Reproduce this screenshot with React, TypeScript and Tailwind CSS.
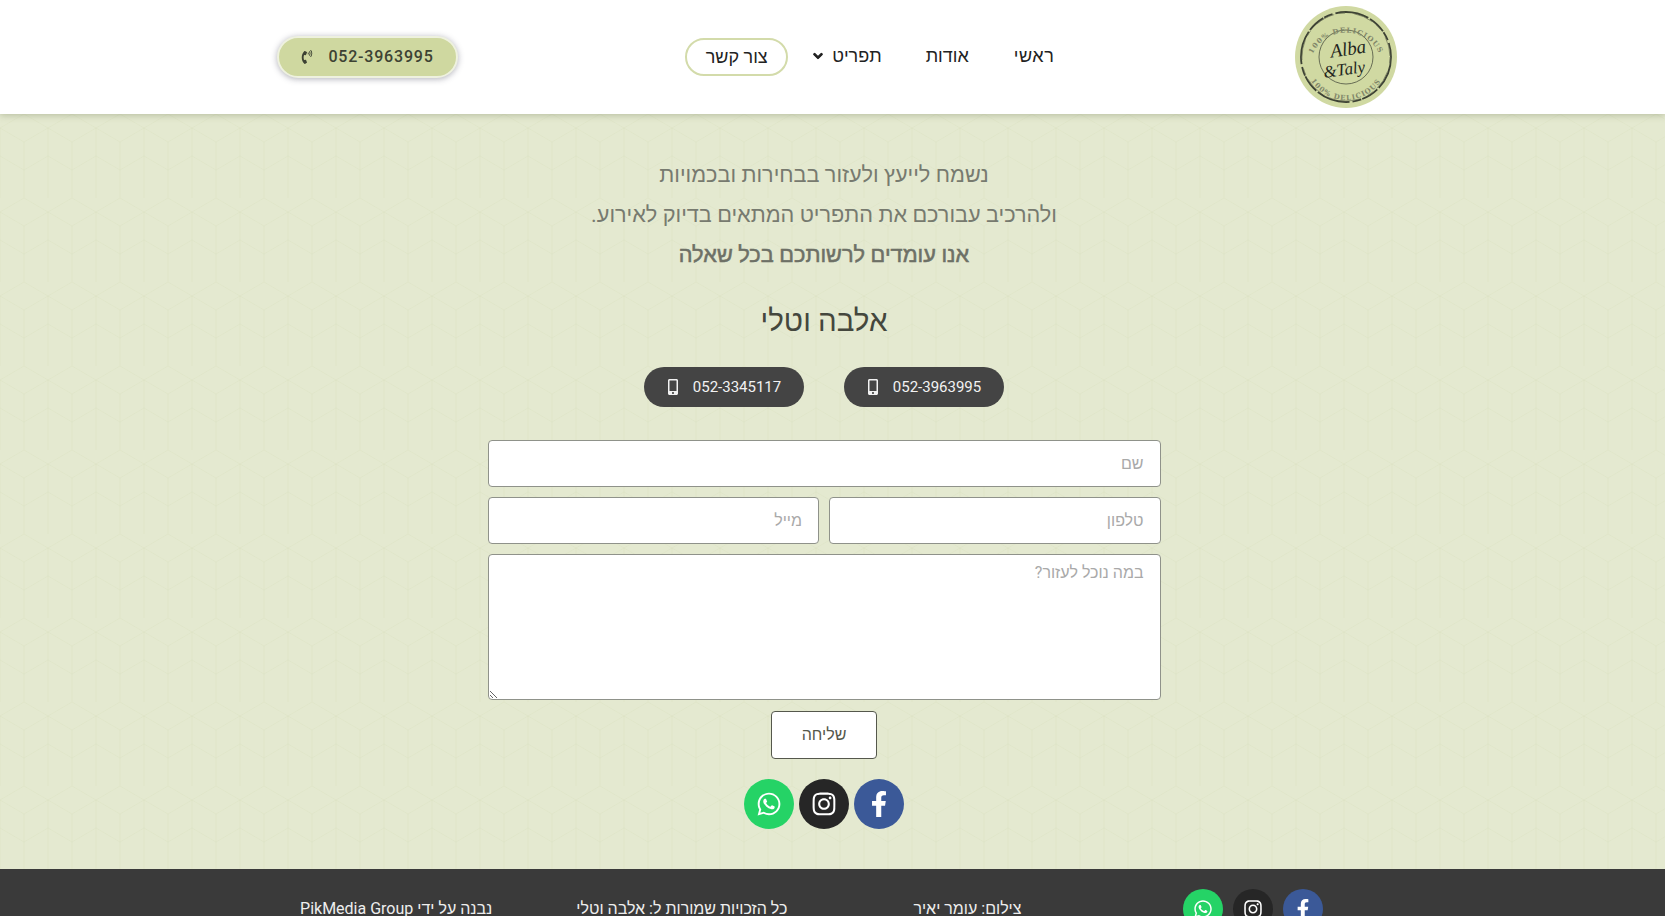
import type { ReactNode } from "react"
import { FaChevronDown, FaFacebookF, FaInstagram, FaMobileAlt, FaPhoneVolume, FaWhatsapp } from "react-icons/fa"

function Logo() {
  return (
    <svg dir="ltr" width="104" height="104" viewBox="0 0 104 104" className="shrink-0">
      <defs>
        <path id="arcTop" d="M 16 58 A 36.5 36.5 0 0 1 88 58" />
        <path id="arcBottom" d="M 11 60 A 41.5 41.5 0 0 0 93 60" />
      </defs>
      <circle cx="52" cy="52" r="51" fill="#d0d9a2" />
      <circle cx="52" cy="52" r="45" fill="none" stroke="#3d4234" strokeWidth="1.8" strokeDasharray="34 2 18 1 9 3" />
      <circle cx="52" cy="52" r="44" fill="none" stroke="#6d7358" strokeWidth="0.7" strokeDasharray="6 9 20 5" />
      <circle cx="52" cy="52" r="27" fill="none" stroke="#4b5040" strokeWidth="0.8" />
      <text direction="ltr" fontSize="7" letterSpacing="1" fill="#808669" fontFamily="'DejaVu Serif', serif" fontWeight="700">
        <textPath href="#arcTop" startOffset="50%" textAnchor="middle">100% DELICIOUS</textPath>
      </text>
      <text direction="ltr" fontSize="7" letterSpacing="1" fill="#808669" fontFamily="'DejaVu Serif', serif" fontWeight="700">
        <textPath href="#arcBottom" startOffset="50%" textAnchor="middle">100% DELICIOUS</textPath>
      </text>
      <text direction="ltr" x="55" y="50" textAnchor="middle" fontSize="19" fontStyle="italic" fill="#23261d" fontFamily="'Liberation Serif', serif" transform="rotate(-8 55 50)">Alba</text>
      <text direction="ltr" x="51" y="70" textAnchor="middle" fontSize="17" fontStyle="italic" fill="#23261d" fontFamily="'Liberation Serif', serif" transform="rotate(-8 51 70)">&amp;Taly</text>
    </svg>
  )
}

function Social({ size, color, children }: { size: string; color: string; children: ReactNode }) {
  return <span className={`flex items-center justify-center rounded-full text-white ${size} ${color}`}>{children}</span>
}

function Socials({ big }: { big: boolean }) {
  const size = big ? "h-[50px] w-[50px]" : "h-10 w-10"
  const icon = big ? 26 : 20
  return (
    <div className={big ? "flex justify-center gap-[5px]" : "flex gap-[10px]"}>
      <Social size={size} color="bg-[#3b5998]"><FaFacebookF size={icon} /></Social>
      <Social size={size} color="bg-[#262626]"><FaInstagram size={icon} /></Social>
      <Social size={size} color="bg-[#25d366]"><FaWhatsapp size={icon} /></Social>
    </div>
  )
}

function PhonePill({ number }: { number: string }) {
  return (
    <a className="flex h-10 w-40 items-center justify-center gap-[12px] rounded-full bg-[#444444] pr-[2px] text-[15px] text-[#f2f2f2]">
      <span dir="ltr">{number}</span>
      <FaMobileAlt size={16} />
    </a>
  )
}

// faint tumbling-block texture of the page background
function Texture() {
  return (
    <svg className="absolute inset-0 h-full w-full" aria-hidden="true">
      <defs>
        <pattern id="blocks" width="48" height="84" patternUnits="userSpaceOnUse">
          <path
            d="M24 0 L48 14 L48 42 L24 56 L0 42 L0 14 Z M24 28 L24 56 M24 28 L0 14 M24 28 L48 14 M0 42 L0 84 M48 42 L48 84 M24 56 L24 84"
            fill="none"
            stroke="#d8dfbd"
            strokeWidth="1"
            opacity="0.35"
          />
        </pattern>
      </defs>
      <rect width="100%" height="100%" fill="url(#blocks)" />
    </svg>
  )
}

const fieldClass =
  "w-full rounded-[4px] border border-[#8f928a] bg-white px-4 text-[16px] text-[#333] placeholder:text-[#a9a9a9] outline-none"

export default function App() {
  return (
    <div
      dir="rtl"
      className="flex h-[916px] flex-col overflow-hidden bg-[#e4e9d0] font-['Roboto','Liberation_Sans',sans-serif]"
    >
      <header className="relative z-10 h-[114px] shrink-0 bg-white shadow-[0_1px_7px_rgba(90,100,60,0.35)]">
        <div className="mx-auto flex h-full w-[1140px] items-center pr-[5px] pl-[14px]">
          <Logo />
          <nav className="mr-[239px] flex items-center text-[18px] leading-[26px] text-[#222]">
            <a className="-translate-y-px tracking-[0.6px]">ראשי</a>
            <a className="mr-[45px] -translate-y-px">אודות</a>
            <a className="mr-[44px] flex -translate-y-px items-center gap-[9px]">
              תפריט
              <FaChevronDown size={10} stroke="currentColor" strokeWidth={60} />
            </a>
            <a className="mr-[25px] flex h-[38px] w-[103px] items-center justify-center rounded-full border-2 border-[#d3dbaa]">
              צור קשר
            </a>
          </nav>
          <a className="mr-auto flex h-[42px] w-[181px] items-center justify-center gap-[14px] rounded-full border-2 border-[#eef1df] bg-[#cfd8a0] text-[16px] font-medium tracking-[0.8px] text-[#3d4233] shadow-[0_1px_6px_rgba(60,60,80,0.4)]">
            <span dir="ltr">052-3963995</span>
            <FaPhoneVolume size={14} />
          </a>
        </div>
      </header>

      <main className="relative flex h-[755px] shrink-0 flex-col items-center pt-[41px] pr-[17px]">
        <Texture />
        <div className="relative flex flex-col items-center">
          <p className="text-[21.7px] leading-[40px] text-[#777a6f]">נשמח לייעץ ולעזור בבחירות ובכמויות</p>
          <p className="text-[21.7px] leading-[40px] text-[#777a6f]">ולהרכיב עבורכם את התפריט המתאים בדיוק לאירוע.</p>
          <p className="text-[21.7px] leading-[40px] text-[#6d7066] tracking-[0.05px] [-webkit-text-stroke:0.55px_#6d7066]">אנו עומדים לרשותכם בכל שאלה</p>
          <h2 className="mt-[26px] text-[29.5px] leading-[40px] text-[#44473d]">אלבה וטלי</h2>
          <div className="mt-[26px] flex gap-10">
            <PhonePill number="052-3963995" />
            <PhonePill number="052-3345117" />
          </div>
          <form className="mt-[33px] flex w-[673px] flex-col gap-[10px]">
            <input placeholder="שם" className={`${fieldClass} h-[47px]`} />
            <div className="flex gap-[10px]">
              <input placeholder="טלפון" className={`${fieldClass} h-[47px]`} />
              <input placeholder="מייל" className={`${fieldClass} h-[47px]`} />
            </div>
            <textarea placeholder="במה נוכל לעזור?" className={`${fieldClass} h-[146px] py-[6px]`} />
            <button
              type="button"
              className="mx-auto mt-[1px] h-12 w-[106px] rounded-[4px] border border-[#55584c] bg-white text-[16px] text-[#55584c]"
            >
              שליחה
            </button>
          </form>
          <div className="mt-5">
            <Socials big />
          </div>
        </div>
      </main>

      <footer className="flex-1 bg-[#3a3a3a] text-[16px] leading-[15px] text-[#eeeeee]">
        <div className="mx-auto flex w-[1140px] items-start pt-5 pr-[80px]">
          <Socials big={false} />
          <span className="mt-[12px] mr-[161px]">צילום: עומר יאיר</span>
          <span className="mt-[12px] mr-[126px]">כל הזכויות שמורות ל: אלבה וטלי</span>
          <span className="mt-[12px] mr-[84px]">נבנה על ידי PikMedia Group</span>
        </div>
      </footer>
    </div>
  )
}
